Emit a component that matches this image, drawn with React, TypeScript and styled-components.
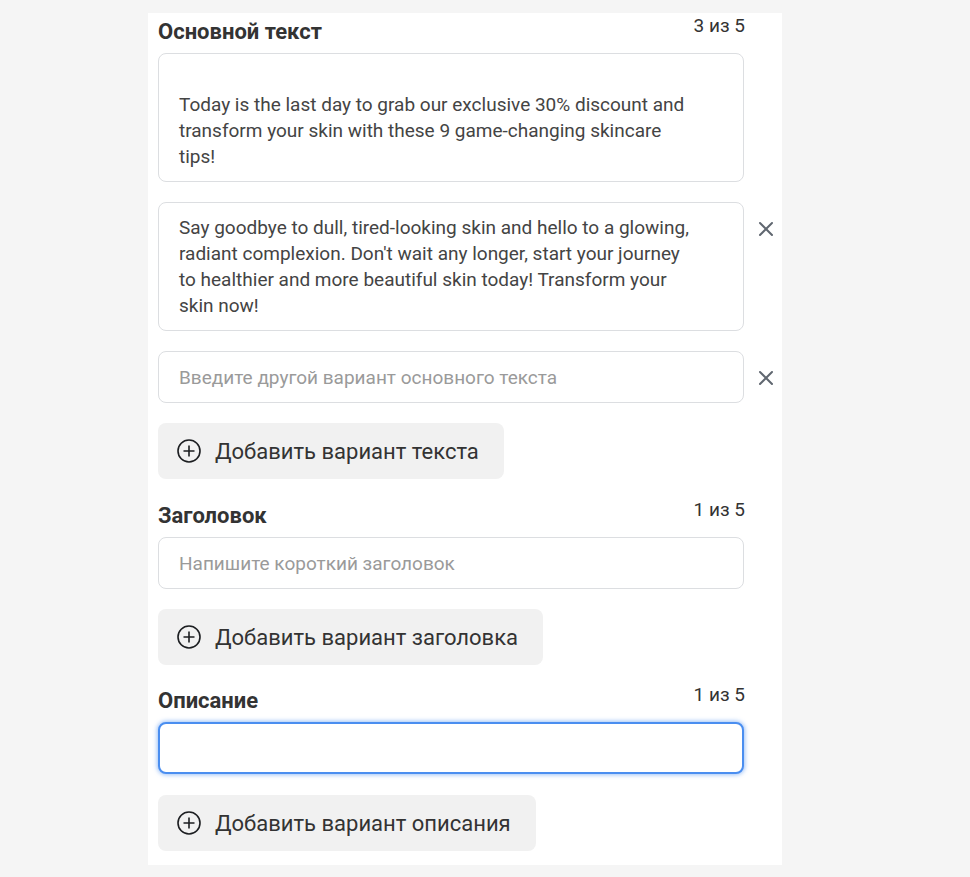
import React from "react";
import styled, { createGlobalStyle, css } from "styled-components";

const Global = createGlobalStyle`
  html, body { margin: 0; padding: 0; background: #f5f5f5; }
  body { font-family: Roboto, "Liberation Sans", Arial, sans-serif; }
  * { box-sizing: border-box; }
`;

const Page = styled.div`
  padding: 13px 0 0 148px;
  min-height: 877px;
`;

const Panel = styled.div`
  width: 634px;
  background: #ffffff;
  padding: 6px 0 14px 10px;
  display: flex;
  flex-direction: column;
`;

const Section = styled.section<{ $top?: number }>`
  display: flex;
  flex-direction: column;
  margin-top: ${(p) => p.$top ?? 0}px;
`;

const Header = styled.div`
  width: 587px;
  display: flex;
  justify-content: space-between;
  align-items: flex-start;
  margin-bottom: 8px;
`;

const Title = styled.h3`
  margin: 0;
  font-size: 22px;
  line-height: 26px;
  font-weight: 700;
  color: #333333;
`;

const Counter = styled.span`
  font-size: 19px;
  line-height: 14px;
  color: #333333;
`;

const List = styled.div`
  display: flex;
  flex-direction: column;
  gap: 20px;
`;

const ItemRow = styled.div`
  display: flex;
  align-items: flex-start;
`;

const boxBase = css`
  width: 586px;
  border: 1px solid #dcdee1;
  border-radius: 8px;
  background: #fff;
  font-family: Roboto, "Liberation Sans", Arial, sans-serif;
  font-size: 19px;
  line-height: 26px;
  color: #444444;
`;

const TextBox = styled.div`
  ${boxBase};
  padding: 12px 50px 11px 20px;
  white-space: pre-wrap;
`;

const Field = styled.input<{ $focused?: boolean }>`
  ${boxBase};
  height: 52px;
  padding: 0 20px;
  outline: none;
  ${(p) =>
    p.$focused &&
    css`
      border: 2px solid #4a8ef0;
      box-shadow: 0 0 4px 1px rgba(74, 142, 240, 0.55);
    `}
  &::placeholder {
    color: #9a9a9a;
  }
`;

const RemoveSlot = styled.div`
  flex: 1;
  display: flex;
  padding: 19px 0 0 14px;
`;

const RemoveButton = styled.button`
  border: 0;
  background: transparent;
  padding: 0;
  width: 16px;
  height: 16px;
  display: flex;
  cursor: pointer;
`;

const AddButton = styled.button<{ $top: number }>`
  align-self: flex-start;
  margin-top: ${(p) => p.$top}px;
  height: 56px;
  display: flex;
  align-items: center;
  gap: 14px;
  padding: 0 25px 0 19px;
  border: 0;
  border-radius: 8px;
  background: #f1f1f1;
  font-family: Roboto, "Liberation Sans", Arial, sans-serif;
  font-size: 22px;
  color: #333333;
  cursor: pointer;
`;

const CloseIcon = () => (
  <svg width="16" height="16" viewBox="0 0 16 16" fill="none">
    <path d="M2 2L14 14M14 2L2 14" stroke="#606770" strokeWidth="2" strokeLinecap="round" />
  </svg>
);

const PlusCircle = () => (
  <svg width="24" height="24" viewBox="0 0 24 24" fill="none">
    <circle cx="12" cy="12" r="11" stroke="#1c1e21" strokeWidth="1.6" />
    <path d="M12 6.5V17.5M6.5 12H17.5" stroke="#1c1e21" strokeWidth="1.6" />
  </svg>
);

const Remove = () => (
  <RemoveSlot>
    <RemoveButton aria-label="Удалить">
      <CloseIcon />
    </RemoveButton>
  </RemoveSlot>
);

const Add = ({ label, top }: { label: string; top: number }) => (
  <AddButton $top={top}>
    <PlusCircle />
    {label}
  </AddButton>
);

export default function App() {
  return (
    <>
      <Global />
      <Page>
        <Panel>
          <Section>
            <Header>
              <Title>Основной текст</Title>
              <Counter>3 из 5</Counter>
            </Header>
            <List>
              <ItemRow>
                <TextBox>
                  {"\nToday is the last day to grab our exclusive 30% discount and transform your skin with these 9 game-changing skincare tips!"}
                </TextBox>
              </ItemRow>
              <ItemRow>
                <TextBox>
                  Say goodbye to dull, tired-looking skin and hello to a glowing, radiant complexion. Don't wait any longer, start your journey to healthier and more beautiful skin today! Transform your skin now!
                </TextBox>
                <Remove />
              </ItemRow>
              <ItemRow>
                <Field placeholder="Введите другой вариант основного текста" />
                <Remove />
              </ItemRow>
            </List>
            <Add label="Добавить вариант текста" top={20} />
          </Section>

          <Section $top={24}>
            <Header>
              <Title>Заголовок</Title>
              <Counter>1 из 5</Counter>
            </Header>
            <ItemRow>
              <Field placeholder="Напишите короткий заголовок" />
            </ItemRow>
            <Add label="Добавить вариант заголовка" top={20} />
          </Section>

          <Section $top={23}>
            <Header>
              <Title>Описание</Title>
              <Counter>1 из 5</Counter>
            </Header>
            <ItemRow>
              <Field $focused />
            </ItemRow>
            <Add label="Добавить вариант описания" top={21} />
          </Section>
        </Panel>
      </Page>
    </>
  );
}
